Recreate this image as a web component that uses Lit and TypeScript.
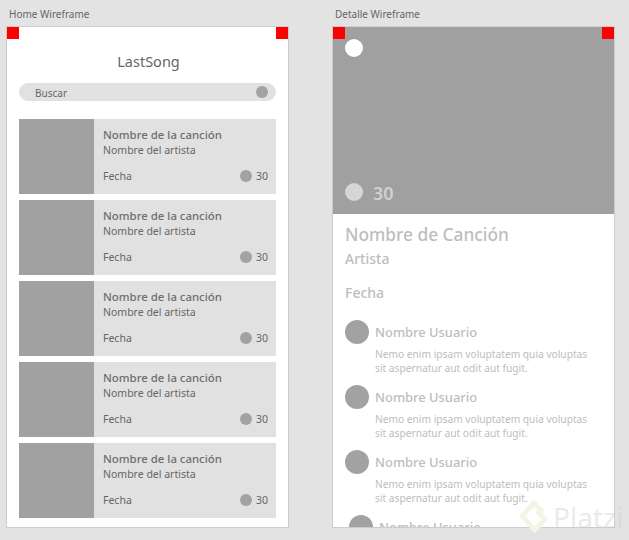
import { LitElement, html, css, svg } from "lit";
import { customElement } from "lit/decorators.js";

@customElement("app-root")
export class AppRoot extends LitElement {
  static styles = css`
    :host { display: block; position: relative; width: 629px; height: 540px; background: #e3e3e3; overflow: hidden;
      font-family: "Noto Sans", "Open Sans", sans-serif; color: #666; }
    .page { display: flex; padding: 8px 0 0 6px; gap: 43px; }
    .col { width: 283px; display: flex; flex-direction: column; }
    .label { font-size: 10px; line-height: 13px; height: 18px; padding-left: 3px; color: #666; }
    .frame { position: relative; width: 283px; height: 502px; box-sizing: border-box; background: #fff; border: 1px solid #ccc; border-top-color:#d0d0d0; overflow: hidden; }
    .mark { position: absolute; top: 0; width: 12px; height: 12px; background: #f00; }
    .mark.l { left: 0; } .mark.r { right: 0; }
    .home { display: flex; flex-direction: column; padding: 0 12px; }
    .brand { font-size: 14.5px; line-height: 20px; text-align: center; margin-top: 24px; padding-left: 2px; color: #666; }
    .search { margin-top: 12px; height: 18px; border-radius: 9px; background: #e1e1e1; display: flex; align-items: center; justify-content: space-between; padding: 0 8px 0 16px; font-size: 10px; }
    .search-label { padding-top: 1px; }
    .dot { width: 12px; height: 12px; border-radius: 50%; background: #a2a2a2; flex: none; }
    .list { margin-top: 18px; display: flex; flex-direction: column; gap: 6px; }
    .card { height: 75px; display: flex; background: #e1e1e1; }
    .thumb { width: 75px; background: #a1a1a1; flex: none; }
    .info { flex: 1; padding: 8px 8px 0 9px; display: flex; flex-direction: column; }
    .song { font-size: 11.4px; line-height: 15px; font-weight: 500; color: #6e6e6e; }
    .artist { font-size: 10.5px; line-height: 15px; color: #666; margin-top: 1px; }
    .foot { display: flex; align-items: center; justify-content: space-between; font-size: 10.5px; line-height: 14px; margin-top: 11px; }
    .likes { display: flex; align-items: center; gap: 4px; }
    .hero { height: 187px; background: #a0a0a0; display: flex; flex-direction: column; justify-content: space-between; padding: 12px; box-sizing: border-box; }
    .hero .big { width: 18px; height: 18px; border-radius: 50%; background: #fff; }
    .hero .row { display: flex; align-items: center; gap: 10px; color: #d2d2d2; font-size: 18px; line-height: 18px; font-weight: 600; }
    .hero .row .big { background: #d6d6d6; }
    .hero .num { padding-top: 2px; }
    .body { padding: 10px 12px 0; color: #bdbdbd; display: flex; flex-direction: column; }
    .title { font-size: 17.3px; line-height: 22px; font-weight: 500; }
    .sub { font-size: 14px; line-height: 18px; font-weight: 500; margin-top: 4px; }
    .sub.date { margin-top: 16px; }
    .comments { margin-top: 18px; display: flex; flex-direction: column; gap: 17px; }
    .comment { display: grid; grid-template-columns: 24px 1fr; column-gap: 6px; height: 48px; }
    .comment.off { padding-left: 4px; }
    .avatar { width: 24px; height: 24px; border-radius: 50%; background: #a2a2a2; }
    .name { font-size: 12.9px; line-height: 24px; font-weight: 500; color: #bdbdbd; }
    .text { grid-column: 2; font-size: 10.2px; line-height: 14px; color: #bdbdbd; white-space: nowrap; margin-top: 3px; }
    .wm { position: absolute; left: 518px; top: 499px; display: flex; align-items: center; gap: 5px; color: rgba(205,205,205,.42); font-size: 28px; line-height: 36px; pointer-events: none; font-family: "Noto Sans", sans-serif; }
    .wm svg { display: block; }
  `;

  private card() {
    return html`<div class="card"><div class="thumb"></div><div class="info">
      <div class="song">Nombre de la canción</div>
      <div class="artist">Nombre del artista</div>
      <div class="foot"><span>Fecha</span><span class="likes"><span class="dot"></span>30</span></div>
    </div></div>`;
  }

  private comment(off = false) {
    return html`<div class="comment ${off ? "off" : ""}"><div class="avatar"></div>
      <div class="name">Nombre Usuario</div>
      <div class="text">Nemo enim ipsam voluptatem quia voluptas<br />sit aspernatur aut odit aut fugit.</div></div>`;
  }

  render() {
    return html`<div class="page">
      <div class="col"><div class="label">Home Wireframe</div>
        <div class="frame"><div class="mark l"></div><div class="mark r"></div>
          <div class="home"><div class="brand">LastSong</div>
            <div class="search"><span class="search-label">Buscar</span><span class="dot"></span></div>
            <div class="list">${[0, 1, 2, 3, 4].map(() => this.card())}</div>
          </div></div></div>
      <div class="col"><div class="label">Detalle Wireframe</div>
        <div class="frame">
          <div class="hero"><div class="big"></div><div class="row"><div class="big"></div><span class="num">30</span></div></div>
          <div class="mark l"></div><div class="mark r"></div>
          <div class="body"><div class="title">Nombre de Canción</div><div class="sub">Artista</div><div class="sub date">Fecha</div>
            <div class="comments">${this.comment()}${this.comment()}${this.comment()}${this.comment(true)}</div></div>
        </div></div>
    </div>
    <div class="wm">${svg`<svg width="30" height="36" viewBox="0 0 30 36" fill="none" stroke="#f3f6e6" stroke-width="5" stroke-linejoin="round"><path d="M25 13 L16 4 L4 17 L17 31 L27 20 L19 12"/></svg>`}<span>Platzi</span></div>`;
  }
}
